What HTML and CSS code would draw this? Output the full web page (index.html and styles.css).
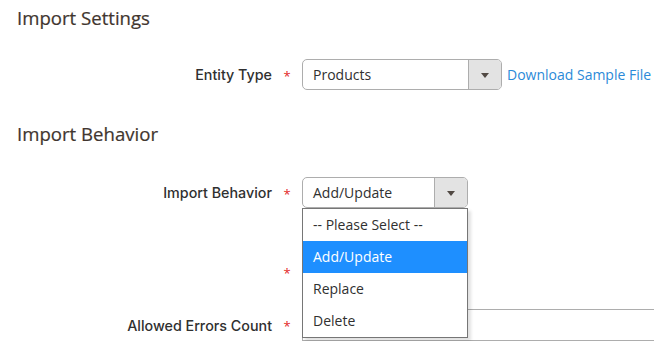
FILE: index.html
```html
<!DOCTYPE html>
<html lang="en">
  <head>
    <meta charset="UTF-8" />
    <title>Import</title>
    <link rel="stylesheet" href="styles.css">
  </head>
  <body>
    <div class="page">
      <h2 class="section-title title-first">Import Settings</h2>
      <div class="form-row row-entity">
        <label class="field-label">Entity Type</label>
        <span class="required">*</span>
        <div class="select">
          <span class="select-value">Products</span>
          <span class="select-button"><span class="arrow"></span></span>
        </div>
        <a class="sample-link" href="#">Download Sample File</a>
      </div>

      <h2 class="section-title title-behavior">Import Behavior</h2>
      <div class="form-row row-behavior">
        <label class="field-label">Import Behavior</label>
        <span class="required">*</span>
        <div class="select select-short">
          <span class="select-value">Add/Update</span>
          <span class="select-button"><span class="arrow"></span></span>
          <!-- open options list -->
          <ul class="options">
            <li class="option">-- Please Select --</li>
            <li class="option option-active">Add/Update</li>
            <li class="option">Replace</li>
            <li class="option">Delete</li>
          </ul>
        </div>
      </div>
      <!-- covered by the open list above -->
      <div class="form-row row-strategy">
        <label class="field-label"></label>
        <span class="required required-low">*</span>
        <div class="select select-short">
          <span class="select-value"></span>
          <span class="select-button"><span class="arrow"></span></span>
        </div>
      </div>
      <div class="form-row row-errors">
        <label class="field-label">Allowed Errors Count</label>
        <span class="required">*</span>
        <input class="text-input" type="text" value="10" />
      </div>
    </div>
  </body>
</html>
```

FILE: styles.css
```css
:root {
  --text: #303030;
  --title: #41362f;
  --border: #adadad;
  --button-bg: #e3e3e3;
  --arrow: #514943;
  --link: #2b8ad8;
  --star: #e22626;
  --active: #1e8fff;
}

html,
body {
  margin: 0;
  padding: 0;
}

body {
  font-family: "Open Sans", sans-serif;
  font-size: 14px;
  color: var(--text);
  background: #fff;
  overflow: hidden;
}

.page {
  padding: 0 0 0 17px;
  width: 900px;
}

.section-title {
  font-size: 18.6px;
  font-weight: 400;
  line-height: 24px;
  color: var(--title);
  margin: 0;
  -webkit-text-stroke: 0.2px var(--title);
}

.title-first {
  padding-top: 6px;
}

.title-behavior {
  margin-top: 32px;
}

.form-row {
  display: flex;
  align-items: center;
}

.row-entity {
  margin-top: 29px;
}

.row-behavior {
  margin-top: 31px;
}

.row-strategy {
  margin-top: 41px;
}

.row-errors {
  margin-top: 29px;
}

.field-label {
  width: 255px;
  text-align: right;
  font-family: "Inter", sans-serif;
  font-weight: 500;
  font-size: 14.3px;
  color: #303030;
}

.required {
  width: 30px;
  text-align: center;
  color: var(--star);
  font-size: 13px;
  line-height: 1;
  padding-top: 3px;
}

.required-low {
  padding-top: 18px;
}

.select {
  position: relative;
  display: flex;
  width: 198px;
  height: 29px;
  border: 1px solid var(--border);
  border-radius: 5px;
  background: #fff;
}

.select-short {
  width: 164px;
}

.select-value {
  flex: 1;
  padding-left: 10px;
  line-height: 29px;
}

.select-button {
  display: flex;
  align-items: center;
  justify-content: center;
  width: 32px;
  background: var(--button-bg);
  border-left: 1px solid var(--border);
  border-radius: 0 4px 4px 0;
}

.arrow {
  width: 0;
  height: 0;
  border-left: 4px solid transparent;
  border-right: 4px solid transparent;
  border-top: 5px solid var(--arrow);
  margin-top: 1px;
}

.sample-link {
  margin-left: 5px;
  color: var(--link);
  text-decoration: none;
  font-size: 14px;
}

.options {
  position: absolute;
  top: 30px;
  left: -1px;
  width: 164px;
  margin: 0;
  padding: 0;
  list-style: none;
  background: #fff;
  border: 1px solid #767676;
  box-shadow: 3px 3px 3px rgba(0, 0, 0, 0.12);
  z-index: 2;
}

.option {
  height: 32px;
  line-height: 32px;
  padding-left: 10px;
  color: var(--text);
}

.option-active {
  background: var(--active);
  color: #fff;
}

.text-input {
  width: 500px;
  height: 30px;
  border: 1px solid var(--border);
  border-radius: 0;
  padding: 0 10px;
  font-family: "Open Sans", sans-serif;
  font-size: 14px;
  color: var(--text);
}
```
